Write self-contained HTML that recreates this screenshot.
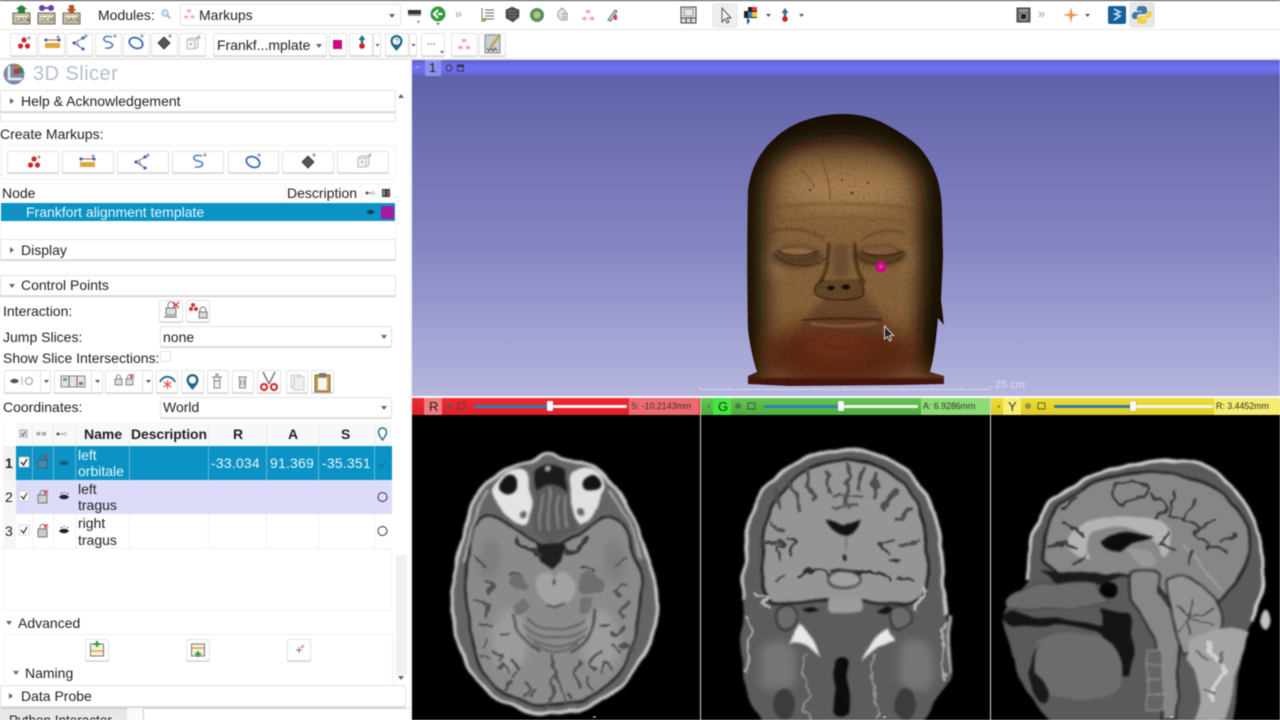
<!DOCTYPE html>
<html>
<head>
<meta charset="utf-8">
<style>
html,body{margin:0;padding:0;width:1280px;height:720px;overflow:hidden;background:#f7f7f7}
body{position:relative;font-family:"Liberation Sans",sans-serif;font-size:14px;color:#222}
#root{position:absolute;left:0;top:0;width:1280px;height:720px;filter:blur(.45px);overflow:hidden;background:#fff}
.a{position:absolute;white-space:nowrap}
.t{position:absolute;white-space:nowrap;line-height:16px}
.btn{position:absolute;box-sizing:border-box;background:#fff;border:1px solid #e2e2e2;border-radius:2px;box-shadow:0 1px 0 #d4d4d4}
.hdr{position:absolute;box-sizing:border-box;background:#fff;border:1px solid #e2e2e2;border-radius:2px;box-shadow:0 1px 0 #cfcfcf}
.tri-r{position:absolute;width:0;height:0;border-left:4px solid #666;border-top:3px solid transparent;border-bottom:3px solid transparent}
.tri-d{position:absolute;width:0;height:0;border-top:4px solid #666;border-left:3px solid transparent;border-right:3px solid transparent}
svg{position:absolute;overflow:visible}
.sl{position:absolute;font-size:8.800px;line-height:14px;color:#333;white-space:nowrap}
</style>
</head>
<body>
<div id="root">
<div class="a" style="left:0;top:0;width:1280px;height:1px;background:#444"></div>
<div class="a" style="left:0;top:29px;width:1280px;height:1px;background:#e4e4e4"></div>
<div class="a" style="left:0;top:58px;width:1280px;height:2px;background:#e8e8e8"></div>

<svg width="1280" height="60" style="left:0;top:0">
<defs>
<g id="pts"><circle cx="8" cy="5" r="2.600" fill="#cf2a30"/><circle cx="4.500" cy="11" r="2.600" fill="#cf2a30"/><circle cx="11.500" cy="11" r="2.600" fill="#cf2a30"/><path d="M13 1v4M11 3h4" stroke="#777" stroke-width=".8"/></g>
<g id="lin"><rect x="1" y="8" width="15" height="5" fill="#d9a73c"/><path d="M2 5h13" stroke="#c44" stroke-width="1"/><circle cx="2" cy="5" r="1.600" fill="#3d66b0"/><circle cx="15" cy="5" r="1.600" fill="#3d66b0"/><path d="M14 0v4M12 2h4" stroke="#777" stroke-width=".8"/></g>
<g id="ang"><path d="M14 3L3 9l9 6" fill="none" stroke="#6f88b0" stroke-width="1.200"/><path d="M6 8l2 4" stroke="#c66" stroke-width="1"/><circle cx="3" cy="9" r="1.600" fill="#3d66b0"/><circle cx="12" cy="15" r="1.600" fill="#3d66b0"/><circle cx="12" cy="4" r="1.600" fill="#3d66b0"/><path d="M15 0v4M13 2h4" stroke="#777" stroke-width=".8"/></g>
<g id="cur"><path d="M12 3C3 0 1 7 8 8s6 7-3 6" fill="none" stroke="#4f7fc6" stroke-width="1.600"/><path d="M15 0v4M13 2h4" stroke="#777" stroke-width=".8"/></g>
<g id="clo"><ellipse cx="8" cy="9" rx="7" ry="5" fill="none" stroke="#3d6bb8" stroke-width="1.800" transform="rotate(25 8 9)"/><path d="M14 0v4M12 2h4" stroke="#777" stroke-width=".8"/></g>
<g id="pla"><path d="M8 3l6 6-6 6-6-6z" fill="#555" stroke="#333" stroke-width=".8"/><path d="M14 0v4M12 2h4" stroke="#777" stroke-width=".8"/></g>
<g id="roi"><path d="M3 5l3-2h8v9l-3 2H3z" fill="#f4f4f4" stroke="#bbb"/><path d="M3 5h8v9M11 5l3-2" fill="none" stroke="#bbb"/><circle cx="7" cy="9" r="1" fill="#e77"/><path d="M15 0v4M13 2h4" stroke="#999" stroke-width=".8"/></g>
<g id="stars" fill="none" stroke="#ee8f95" stroke-width=".8"><path d="M6 1v5M3.500 2.500l5 2M8.500 2.500l-5 2"/><path d="M2.500 8v5M0 9.500l5 2M5 9.500l-5 2"/><path d="M10 8v5M7.500 9.500l5 2M12.500 9.500l-5 2"/></g>
<g id="disk"><rect x="0" y="7" width="17" height="11" fill="#d8cfa8" stroke="#444" stroke-width=".8"/><rect x="2" y="9" width="13" height="7" fill="#eee8cc" stroke="#777" stroke-width=".4"/></g>
</defs>
<g transform="translate(13,6)"><use href="#disk"/><path d="M5 7V3H2.500L8.500-1 14.500 3H12v4z" fill="#2e7d3c"/><text x="2.800" y="15.500" font-size="5.500" font-family="Liberation Sans" fill="#333">DATA</text></g>
<g transform="translate(38,6)"><use href="#disk"/><circle cx="4" cy="2" r="3" fill="#6a3fa0"/><circle cx="13" cy="2" r="3" fill="#6a3fa0"/><path d="M7 2h3" stroke="#6a3fa0" stroke-width="2"/><text x="3" y="15.500" font-size="5.500" font-family="Liberation Sans" fill="#333">DCM</text></g>
<g transform="translate(63,6)"><use href="#disk"/><path d="M6-1h5v4h2.500L8.500 8 3.500 3H6z" fill="#b5502a"/><text x="2.200" y="15.500" font-size="5.500" font-family="Liberation Sans" fill="#333">SAVE</text></g>
<circle cx="165" cy="13" r="3.200" fill="#d9e6f4" stroke="#8fb0d0"/><path d="M167.500 15.500l3 3" stroke="#c9a868" stroke-width="1.600"/>
<rect x="408" y="10" width="13" height="4" fill="#333"/><rect x="408" y="14" width="13" height="2" fill="#999"/>
<path d="M417 21l3 0-1.500 2z" fill="#555"/>
<circle cx="438" cy="14" r="7.500" fill="#2f9a3e"/><path d="M442.500 14h-4.500M438 10l-4 4 4 4" stroke="#fff" stroke-width="2.200" fill="none"/>
<path d="M436 23h4l-2 2z" fill="#555"/>
<path d="M456 12l2 2.500-2 2.500M459 12l2 2.500-2 2.500" stroke="#888" fill="none" stroke-width=".8"/>
<g transform="translate(481,8)"><path d="M1 0v13h3" stroke="#4a8a5a" fill="none"/><path d="M4 2h9M4 5h9M4 8h9M4 11h9" stroke="#666" stroke-width="1"/><rect x="2" y="10" width="3" height="3" fill="#d0803c"/></g>
<path d="M506 10l6-3 7 3v7l-6 5-7-4z" fill="#4a4f4a" stroke="#333" stroke-width=".5"/><path d="M508 11h9M508 14h9M509 17h7" stroke="#888" stroke-width=".7"/>
<circle cx="537" cy="15" r="7" fill="#5f8f58"/><circle cx="537" cy="15" r="3.500" fill="#a8c890"/>
<path d="M558 12l4-4 5 5v7h-6l-3-3z" fill="#e8e8e8" stroke="#888" stroke-width=".8"/><path d="M561 14h6M561 17h6M564 12v8" stroke="#888" stroke-width=".6"/>
<use href="#stars" x="582" y="8"/>
<path d="M608 20l7-10 2 1-6 10z" fill="#cfd8e8" stroke="#667"/><rect x="614" y="15" width="3" height="3" fill="#d33"/><rect x="614" y="18" width="3" height="2" fill="#c3c"/>
<g transform="translate(681,7)"><rect width="15" height="11" fill="#e6e6e6" stroke="#444"/><rect x="3" y="2" width="9" height="7" fill="none" stroke="#999"/><rect x="0" y="11" width="15" height="5" fill="#ddd" stroke="#444"/><path d="M5 11v5M10 11v5" stroke="#444"/></g>
<rect x="713" y="4" width="24" height="23" rx="2" fill="#efefef" stroke="#e4e4e4"/>
<path d="M722 8v14l3-3 2 4 2-1-2-4h4z" fill="#f4f4f4" stroke="#555" stroke-width="1"/>
<g transform="translate(744,7)"><rect width="13" height="11" fill="#222"/><rect x="0" y="0" width="4" height="4" fill="#fff"/><rect x="8" y="0" width="5" height="4" fill="#e33"/><rect x="4" y="5" width="5" height="5" fill="#38c"/><rect x="8" y="5" width="5" height="5" fill="#ec3"/><path d="M3 10v8l3-4z" fill="#2b4a88"/></g>
<path d="M766 14h5l-2.500 3z" fill="#555"/>
<path d="M785 8l3.500 5h-2.200v5h-2.600v-5h-2.200z" fill="#2d7088"/><circle cx="785" cy="19" r="2.800" fill="#c22"/>
<path d="M799 14h5l-2.500 3z" fill="#555"/>
<g transform="translate(1017,8)"><rect width="13" height="14" fill="#666" stroke="#444"/><circle cx="6.500" cy="8.500" r="3.500" fill="#222" stroke="#bbb"/><rect x="2" y="1.500" width="9" height="2" fill="#8ac"/></g>
<path d="M1039 12l2 2.500-2 2.500M1042 12l2 2.500-2 2.500" stroke="#888" fill="none" stroke-width=".8"/>
<path d="M1071 7l1.500 6.500 6.500 1.500-6.500 1.500-1.500 6.500-1.500-6.500-6.500-1.500 6.500-1.500z" fill="#e89a4c"/>
<path d="M1085 14h5l-2.500 3z" fill="#555"/>
<rect x="1108" y="6" width="18" height="18" rx="2" fill="#155f9c"/><path d="M1114 9l6 3-5 2 5 2-6 4" stroke="#bfe0f2" stroke-width="1.700" fill="none"/>
<rect x="1130" y="3" width="24" height="24" rx="2" fill="#e8e8e8" stroke="#ddd"/>
<path d="M1142 6c-4 0-5 1-5 3v2h5v1h-7c-2 0-3 2-3 4s1 3 3 3h2v-2c0-2 1-3 3-3h4c2 0 3-1 3-3V9c0-2-2-3-5-3z" fill="#3b77a8"/>
<path d="M1142 24c4 0 5-1 5-3v-2h-5v-1h7c2 0 3-2 3-4s-1-3-3-3h-2v2c0 2-1 3-3 3h-4c-2 0-3 1-3 3v2c0 2 2 3 5 3z" fill="#f2cf4a"/>
</svg>

<div class="t" style="left:98px;top:7px;font-size:14px">Modules:</div>
<div class="btn" style="left:180px;top:4px;width:221px;height:22px;box-shadow:none"></div>
<svg width="14" height="14" style="left:184px;top:8px"><use href="#stars" transform="scale(.85)"/></svg>
<div class="t" style="left:199px;top:7px;font-size:14px">Markups</div>
<div class="tri-d" style="left:389px;top:14px"></div>

<div class="btn" style="left:10px;top:33px;width:27px;height:23px"></div>
<div class="btn" style="left:38px;top:33px;width:27px;height:23px"></div>
<div class="btn" style="left:66px;top:33px;width:27px;height:23px"></div>
<div class="btn" style="left:95px;top:33px;width:27px;height:23px"></div>
<div class="btn" style="left:123px;top:33px;width:27px;height:23px"></div>
<div class="btn" style="left:151px;top:33px;width:27px;height:23px"></div>
<div class="btn" style="left:179px;top:33px;width:27px;height:23px"></div>
<div class="btn" style="left:213px;top:33px;width:114px;height:23px"></div>
<div class="t" style="left:217px;top:37px;font-size:14px">Frankf...mplate</div>
<div class="tri-d" style="left:316px;top:44px"></div>
<div class="btn" style="left:329px;top:33px;width:18px;height:23px"></div>
<div class="a" style="left:333px;top:40px;width:9px;height:9px;background:#cc0a7a"></div>
<div class="btn" style="left:349px;top:33px;width:24px;height:23px"></div>
<div class="btn" style="left:373px;top:33px;width:8px;height:23px"></div>
<div class="btn" style="left:385px;top:33px;width:24px;height:23px"></div>
<div class="btn" style="left:409px;top:33px;width:8px;height:23px"></div>
<div class="btn" style="left:421px;top:33px;width:24px;height:23px"></div>
<div class="btn" style="left:451px;top:33px;width:27px;height:23px"></div>
<div class="btn" style="left:479px;top:33px;width:27px;height:23px"></div>
<svg width="520" height="30" style="left:0;top:30px">
<use href="#pts" x="16" y="5"/><use href="#lin" x="44" y="5"/><use href="#ang" x="71" y="4"/><use href="#cur" x="100" y="4"/><use href="#clo" x="128" y="4"/><use href="#pla" x="156" y="4"/><use href="#roi" x="184" y="5"/>
<path d="M362 5l3.500 5h-2.200v5h-2.600v-5h-2.200z" fill="#2d7088"/><circle cx="362" cy="16" r="2.800" fill="#c22"/>
<path d="M375.500 14h4l-2 2.500z" fill="#555"/>
<path d="M396.500 21c-3-4-6-6-6-10a6 6 0 0112 0c0 4-3 6-6 10z" fill="#1f6a88"/><circle cx="396.500" cy="11" r="3.800" fill="#fff"/><text x="394.700" y="13.500" font-size="7" font-family="Liberation Sans" fill="#1f6a88">?</text>
<path d="M411.500 14h4l-2 2.500z" fill="#555"/>
<circle cx="428" cy="14" r=".8" fill="#777"/><circle cx="431" cy="14" r=".8" fill="#777"/><circle cx="434" cy="14" r=".8" fill="#777"/><path d="M440 21h4l-2 2.500z" fill="#555"/>
<use href="#stars" x="458" y="7"/>
<g transform="translate(485,5)"><rect width="15" height="18" fill="#c8d0d0" stroke="#889"/><path d="M2 13l2 3 2-3 2 3 2-3 2 3" stroke="#555" fill="none"/><path d="M5 11L14 0l1 1-8 11z" fill="#e0b030" stroke="#864" stroke-width=".4"/></g>
</svg>

<!-- 3D view -->
<div class="a" style="left:410px;top:60px;width:2px;height:660px;background:#f4f4f4"></div>
<div class="a" style="left:412px;top:76px;width:868px;height:320px;background:linear-gradient(180deg,#6161a9 0%,#8787c4 55%,#b6b6e0 100%)"></div>
<div class="a" style="left:412px;top:60px;width:868px;height:16px;background:linear-gradient(180deg,#5d60c4 0%,#6d70f0 35%,#6d70ee 70%,#5f62b8 100%)"></div>
<div class="a" style="left:425px;top:60px;width:16px;height:16px;background:#8e92ee"></div>
<div class="t" style="left:429px;top:60px;font-size:13px;color:#223">1</div>
<svg width="20" height="16" style="left:412px;top:60px"><path d="M3 7h4" stroke="#bbc"/></svg>
<svg width="20" height="16" style="left:445px;top:60px"><circle cx="4" cy="8" r="3" fill="none" stroke="#334" stroke-width=".9"/><rect x="12.500" y="5" width="6" height="6" fill="none" stroke="#334" stroke-width=".9"/><rect x="12.500" y="5" width="6" height="2" fill="#334"/></svg>

<svg width="868" height="336" viewBox="412 60 868 336" style="left:412px;top:60px">
<defs>
<clipPath id="hc"><path d="M748 384L748 376L757 372C753 360 750 345 748 330C747 290 747 230 748 190C751 170 757 158 767 146C778 134 787 128 798 123C815 116 830 114 843 114C860 114 875 118 887 125C902 133 912 140 920 148C930 160 936 172 939 185C941 195 942 205 942 212L943 257L941 300L944 325L938 318C936 340 934 358 930 372L944 376L944 384L900 385L790 386z"/></clipPath>
<filter id="b14" filterUnits="userSpaceOnUse" x="690" y="60" width="310" height="350"><feGaussianBlur stdDeviation="14"/></filter>
<filter id="b10" filterUnits="userSpaceOnUse" x="690" y="60" width="310" height="350"><feGaussianBlur stdDeviation="10"/></filter>
<filter id="b6" filterUnits="userSpaceOnUse" x="690" y="60" width="310" height="350"><feGaussianBlur stdDeviation="6"/></filter>
<filter id="b3" filterUnits="userSpaceOnUse" x="690" y="60" width="310" height="350"><feGaussianBlur stdDeviation="3"/></filter>
<filter id="b1" filterUnits="userSpaceOnUse" x="690" y="60" width="310" height="350"><feGaussianBlur stdDeviation="1"/></filter>
<filter id="b05" filterUnits="userSpaceOnUse" x="690" y="60" width="310" height="350"><feGaussianBlur stdDeviation=".6"/></filter>
<filter id="skin" filterUnits="userSpaceOnUse" x="690" y="60" width="310" height="350" color-interpolation-filters="sRGB">
<feTurbulence type="fractalNoise" baseFrequency=".35" numOctaves="2" seed="3" result="n"/>
<feColorMatrix in="n" type="matrix" values=".28 .28 0 0 .72  .28 .28 0 0 .72  .28 .28 0 0 .72  0 0 0 0 1" result="g"/>
<feBlend in="SourceGraphic" in2="g" mode="multiply" result="r"/>
<feGaussianBlur in="r" stdDeviation=".35"/>
</filter>
</defs>
<g clip-path="url(#hc)">
<g filter="url(#skin)">
<rect x="700" y="80" width="290" height="320" fill="#85613a"/>
<ellipse cx="845" cy="190" rx="60" ry="20" fill="#a57d50" filter="url(#b10)"/>
<ellipse cx="772" cy="262" rx="11" ry="16" fill="#a68860" opacity=".7" filter="url(#b6)"/>
<ellipse cx="912" cy="258" rx="11" ry="16" fill="#98784e" opacity=".5" filter="url(#b6)"/>
<path d="M700 70H990V150C900 138 790 138 700 150Z" fill="#190f07" filter="url(#b14)"/>
<path d="M748 384L748 330C747 290 747 230 748 190C751 170 757 158 767 146C778 134 787 128 798 123C815 116 830 114 843 114C860 114 875 118 887 125C902 133 912 140 920 148C930 160 936 172 939 185C941 195 942 205 942 212L943 257L941 300L938 318C936 340 934 358 930 372" fill="none" stroke="#170d06" stroke-width="34" filter="url(#b10)"/>
<path d="M940 200V370" stroke="#150c05" stroke-width="26" opacity=".7" filter="url(#b10)"/>
<ellipse cx="840" cy="355" rx="80" ry="34" fill="#562411" opacity=".9" filter="url(#b10)"/>
<ellipse cx="838" cy="345" rx="34" ry="15" fill="#73301a" opacity=".7" filter="url(#b6)"/>
<path d="M805 320L835 285L860 285L885 320L880 335L800 335z" fill="#5c3820" opacity=".6" filter="url(#b3)"/>
<path d="M822 158c2 12 8 20 8 42M800 170c6 4 12 10 14 18" stroke="#5e4026" stroke-width="1.500" fill="none" opacity=".5" filter="url(#b05)"/>
<path d="M775 208C800 202 890 202 915 210" stroke="#5d3f24" stroke-width="3" fill="none" opacity=".35" filter="url(#b1)"/>
<path d="M780 222C810 216 870 216 905 222" stroke="#5d3f24" stroke-width="2" fill="none" opacity=".3" filter="url(#b1)"/>
<circle cx="852" cy="193" r="1.500" fill="#5e4226"/><circle cx="810" cy="190" r="1.300" fill="#5e4226"/><circle cx="842" cy="180" r="1.100" fill="#5e4226"/><circle cx="868" cy="183" r="1.100" fill="#5e4226"/>
<ellipse cx="797" cy="257" rx="26" ry="11" fill="#2a1a0d" opacity=".5" filter="url(#b3)"/>
<ellipse cx="880" cy="256" rx="26" ry="10" fill="#2a1a0d" opacity=".5" filter="url(#b3)"/>
<ellipse cx="797" cy="252" rx="17" ry="4.500" fill="#9a6e48" opacity=".85" filter="url(#b1)"/>
<ellipse cx="880" cy="251" rx="17" ry="4.500" fill="#8f5e40" opacity=".85" filter="url(#b1)"/>
<path d="M778 251C788 257 806 257 818 251M862 252C872 257 892 257 904 251" stroke="#2e1c0e" stroke-width="1.100" fill="none" filter="url(#b05)"/>
<path d="M774 253C784 268 815 270 826 258M860 258C872 268 895 266 906 253" stroke="#2a1a0c" stroke-width="1.100" fill="none" opacity=".7" filter="url(#b05)"/>
<path d="M770 232C790 226 812 230 825 240M862 240C875 230 895 228 905 234" stroke="#4a301a" stroke-width="2.200" fill="none" opacity=".5" filter="url(#b1)"/>
<path d="M829 243C828 265 826 275 819 283M855 243C855 265 858 275 865 283" stroke="#281708" stroke-width="3" fill="none" opacity=".7" filter="url(#b1)"/>
<rect x="833" y="245" width="16" height="32" fill="#644a2d" opacity=".8" filter="url(#b3)"/>
<path d="M824 280C813 285 811 294 820 297C830 301 855 301 862 296C865 291 864 284 858 279" fill="#644526" stroke="#26160a" stroke-width="1.100" filter="url(#b05)"/>
<ellipse cx="831" cy="288" rx="3.800" ry="2.200" fill="#120a05" filter="url(#b05)"/><ellipse cx="846" cy="287" rx="4.200" ry="2.600" fill="#120a05" filter="url(#b05)"/>
<path d="M802 320C825 318 860 318 882 320" stroke="#321a0e" stroke-width="1.200" fill="none" filter="url(#b05)"/>
<path d="M810 323C825 327 860 327 876 323" stroke="#8e6648" stroke-width="3" fill="none" opacity=".7" filter="url(#b1)"/>
<path d="M820 343C835 350 850 350 865 343" stroke="#4c1e10" stroke-width="1.500" fill="none" opacity=".5" filter="url(#b1)"/>
<rect x="730" y="378" width="230" height="14" fill="#44190d" filter="url(#b1)"/>
</g>
</g>
<circle cx="881" cy="267" r="5.500" fill="#cc0a80"/><circle cx="881" cy="266.500" r="2.200" fill="#e8309c"/>
<path d="M884.500 326v13l3-2.500 2 4.500 2-1-2-4.500h4z" fill="#222" stroke="#fff" stroke-width=".8"/>
<path d="M700 389.500H990" stroke="#d6d6ee" stroke-width="1"/>
<path d="M700 386v3M729 387v2M758 387v2M787 387v2M816 387v2M845 386v3M874 387v2M903 387v2M932 387v2M961 387v2M990 386v3" stroke="#d6d6ee" stroke-width=".8"/>
<text x="995" y="388" font-size="11" font-family="Liberation Sans" fill="#dcdcf2">25 cm</text>
</svg>

<!-- slice bars -->
<div class="a" style="left:412px;top:396px;width:868px;height:2px;background:#fafafa"></div>
<div class="a" style="left:412px;top:398px;width:288px;height:17px;background:linear-gradient(180deg,#ef2a30,#e01f28)"></div>
<div class="a" style="left:701px;top:398px;width:289px;height:17px;background:linear-gradient(180deg,#64c44f,#4eac3e)"></div>
<div class="a" style="left:991px;top:398px;width:289px;height:17px;background:linear-gradient(180deg,#eedd33,#dfcc24)"></div>
<div class="a" style="left:412px;top:415px;width:868px;height:305px;background:#000"></div>
<div class="a" style="left:700px;top:398px;width:1px;height:322px;background:#d8d8d8"></div>
<div class="a" style="left:990px;top:398px;width:1px;height:322px;background:#d8d8d8"></div>
<div class="a" style="left:424px;top:398px;width:18px;height:17px;background:#f07a7c"></div>
<div class="t" style="left:429px;top:399px;font-size:13px;color:#222">R</div>
<div class="a" style="left:713px;top:398px;width:18px;height:17px;background:#44e83e"></div>
<div class="t" style="left:718px;top:399px;font-size:13px;color:#1a3a1a">G</div>
<div class="a" style="left:1003px;top:398px;width:18px;height:17px;background:#f8ee70"></div>
<div class="t" style="left:1008px;top:399px;font-size:13px;color:#333">Y</div>
<div class="a" style="left:474px;top:405px;width:153px;height:3px;border-radius:2px;background:linear-gradient(90deg,#2f7fb4 0,#2f7fb4 50%,#f4f4f4 50%,#f4f4f4 100%)"></div>
<div class="a" style="left:764px;top:405px;width:154px;height:3px;border-radius:2px;background:linear-gradient(90deg,#2f7fb4 0,#2f7fb4 50%,#f4f4f4 50%,#f4f4f4 100%)"></div>
<div class="a" style="left:1054px;top:405px;width:159px;height:3px;border-radius:2px;background:linear-gradient(90deg,#2f7fb4 0,#2f7fb4 50%,#f4f4f4 50%,#f4f4f4 100%)"></div>
<div class="a" style="left:547px;top:401px;width:6px;height:10px;background:#fafafa;border-radius:1px;box-shadow:0 0 1px #555"></div>
<div class="a" style="left:838px;top:401px;width:6px;height:10px;background:#fafafa;border-radius:1px;box-shadow:0 0 1px #555"></div>
<div class="a" style="left:1130px;top:401px;width:6px;height:10px;background:#fafafa;border-radius:1px;box-shadow:0 0 1px #555"></div>
<div class="a" style="left:629px;top:398px;width:70px;height:17px;background:#ee6a6e"></div>
<div class="a" style="left:921px;top:398px;width:69px;height:17px;background:#8edb76"></div>
<div class="a" style="left:1214px;top:398px;width:66px;height:17px;background:#f6ec70"></div>
<div class="sl" style="left:631px;top:399px">S: -10.2143mm</div>
<div class="sl" style="left:923px;top:399px">A: 6.9286mm</div>
<div class="sl" style="left:1216px;top:399px">R: 3.4452mm</div>
<svg width="868" height="17" viewBox="412 398 868 17" style="left:412px;top:398px">
<path d="M418 405v3l-2-1.500zM708 405v3l2-1.500zM998 405v3l2-1.500z" fill="#555"/>
<circle cx="449" cy="406" r="3" fill="#555" opacity=".6"/><rect x="458" y="403" width="7" height="6" fill="none" stroke="#444" stroke-width=".8"/>
<circle cx="738" cy="406" r="3" fill="#355" opacity=".6"/><rect x="748" y="403" width="7" height="6" fill="none" stroke="#344" stroke-width=".8"/>
<circle cx="1028" cy="406" r="3" fill="#665" opacity=".6"/><rect x="1038" y="403" width="7" height="6" fill="none" stroke="#443" stroke-width=".8"/>
</svg>

<!-- MRI slices -->
<svg width="868" height="305" viewBox="412 415 868 305" style="left:412px;top:415px">
<defs>
<filter id="o1" filterUnits="userSpaceOnUse" x="412" y="415" width="868" height="320" color-interpolation-filters="sRGB">
<feTurbulence type="fractalNoise" baseFrequency=".035" numOctaves="2" seed="5" result="n"/>
<feDisplacementMap in="SourceGraphic" in2="n" scale="8" xChannelSelector="R" yChannelSelector="G" result="d"/>
<feGaussianBlur in="d" stdDeviation="1.100"/>
</filter>
<filter id="o2" filterUnits="userSpaceOnUse" x="412" y="415" width="868" height="320" color-interpolation-filters="sRGB">
<feTurbulence type="fractalNoise" baseFrequency=".05" numOctaves="3" seed="11" result="n"/>
<feDisplacementMap in="SourceGraphic" in2="n" scale="16" xChannelSelector="R" yChannelSelector="G" result="d"/>
<feGaussianBlur in="d" stdDeviation=".9"/>
</filter>
<filter id="m2" filterUnits="userSpaceOnUse" x="412" y="415" width="868" height="320"><feGaussianBlur stdDeviation="4"/></filter>
<clipPath id="lowR"><rect x="412" y="415" width="288" height="305"/></clipPath>
<clipPath id="lowG"><rect x="701" y="415" width="289" height="305"/></clipPath>
<clipPath id="lowY"><rect x="991" y="415" width="289" height="305"/></clipPath>
</defs>
<!-- axial -->
<g clip-path="url(#lowR)">
<g filter="url(#o1)">
<path d="M548 453C558 453 564 460 574 463C596 466 612 478 622 496C636 520 646 548 652 572C658 590 658 610 654 630C644 672 606 712 550 714C496 714 462 672 454 626C449 600 452 586 456 566C464 530 470 506 482 488C492 474 510 466 530 463C538 460 540 453 548 453Z" fill="#646464" stroke="#c8c8c8" stroke-width="3.500"/>
<path d="M470 540C476 520 488 505 505 522L550 552L596 522C615 505 628 530 640 570C646 600 640 640 620 670C600 698 580 704 552 706C520 706 496 694 480 664C466 640 464 580 470 540Z" fill="#8a8a8a" stroke="#1c1c1c" stroke-width="2.200"/>
<path d="M488 490C478 510 468 535 464 562M610 490C622 510 634 530 642 558" fill="none" stroke="#a2a2a2" stroke-width="3"/>
<ellipse cx="510" cy="640" rx="18" ry="30" fill="#a0a0a0" opacity=".8" filter="url(#m2)"/>
<ellipse cx="600" cy="640" rx="18" ry="30" fill="#a0a0a0" opacity=".8" filter="url(#m2)"/>
<ellipse cx="490" cy="560" rx="12" ry="20" fill="#787878" opacity=".7" filter="url(#m2)"/>
<ellipse cx="614" cy="560" rx="12" ry="20" fill="#787878" opacity=".7" filter="url(#m2)"/>
<path d="M492 490C494 472 520 466 528 474C532 490 532 510 526 524C514 526 500 512 492 490Z" fill="#e4e4e4"/>
<path d="M606 485C604 470 580 465 572 474C568 490 570 512 578 524C590 522 602 505 606 485Z" fill="#e0e0e0"/>
<ellipse cx="508" cy="485" rx="10" ry="9" fill="#141414"/><ellipse cx="592" cy="484" rx="10" ry="8" fill="#141414"/>
<circle cx="522" cy="514" r="3.500" fill="#666"/><circle cx="580" cy="512" r="3.500" fill="#666"/>
<path d="M533 472L567 470L571 500L576 530L552 544L532 530L534 500Z" fill="#5a5a5a"/>
<path d="M541 495l-2 34M549 488v42M557 495l2 34M564 495l3 32" stroke="#8c8c8c" stroke-width="2.200"/>
<path d="M536 472C540 462 560 462 566 472L566 492C555 482 545 482 536 492Z" fill="#1c1c1c"/><circle cx="549" cy="469" r="3" fill="#aaa"/>
<path d="M538 546C546 542 556 542 566 546L562 562L552 570L542 562Z" fill="#1f1f1f"/>
<path d="M537 578C545 568 552 572 554 580C556 572 566 568 574 578C580 590 574 604 558 606C544 606 532 592 537 578Z" fill="#a2a2a2"/>
<path d="M554 580v6" stroke="#222" stroke-width="1.800"/><path d="M547 604l8 3 9-3" stroke="#333" stroke-width="1.500" fill="none"/>
<path d="M528 618C540 634 570 634 585 618M526 626C540 642 572 642 588 626M528 634C542 650 570 650 586 634M534 642C544 654 566 654 578 642" stroke="#4a4a4a" stroke-width="1.300" fill="none"/>
<path d="M512 614C514 630 524 642 540 651M596 610C594 630 590 642 570 652" stroke="#3a3a3a" stroke-width="2" fill="none"/>
</g>
<g filter="url(#o2)">
<path d="M514 540C526 545 532 552 542 556M590 536C580 542 572 550 562 554" stroke="#3a3a3a" stroke-width="3.500" fill="none"/>
<ellipse cx="517" cy="581" rx="10" ry="8" fill="#6e6e6e"/><ellipse cx="590" cy="583" rx="11" ry="10" fill="#6e6e6e"/>
<path d="M507 574C512 570 518 570 524 574M580 570C586 568 594 570 598 574" stroke="#222" stroke-width="1.600" fill="none"/>
<ellipse cx="520" cy="608" rx="7" ry="7" fill="#727272"/><ellipse cx="587" cy="604" rx="7" ry="8" fill="#727272"/>
<path d="M496 650l8 6-6 6M510 660l10 10-8 8M526 680l6 8-6 10M552 652v46l-8 8M552 672l10 14 6 18M580 660l-8 12 10 14M600 650l-10 10 6 8M475 600l12 6-4 10M630 602l-10 4 2 14M476 560l10 4M628 560l-10 6M490 640l-6 4M612 645l8 6M500 630l10 4M615 625l-14 2M485 580l10 6-6 8M626 585l-12 4 6 8M478 625l14-2M632 650l-12-4M495 672l8-6 4 10M612 670l-8-6-4 12M530 698l6-8M575 698l-6-8M505 690l8-10M595 688l-8-10M482 655l10 2M622 632l-10 2" stroke="#505050" stroke-width="2.600" fill="none"/>
</g>
</g>
<!-- coronal -->
<g clip-path="url(#lowG)">
<g filter="url(#o1)">
<path d="M847 450C890 450 925 475 938 530C944 560 944 590 945 615C951 640 950 660 950 680L935 700C930 712 925 720 915 725H765C755 715 752 700 744 680C740 650 742 620 744 600C742 570 746 520 760 495C775 470 810 450 847 450Z" fill="#5c5c5c"/>
<path d="M847 450C890 450 925 475 938 530C944 560 944 590 945 615M744 600C742 570 746 520 760 495C775 470 810 450 847 450" fill="none" stroke="#c8c8c8" stroke-width="3.500"/>
<path d="M847 460C885 460 920 485 926 540C930 565 930 590 924 598C910 606 880 605 860 600L815 600C790 606 775 605 768 600C762 590 761 565 763 540C770 485 810 460 847 460Z" fill="#959595" stroke="#1a1a1a" stroke-width="2.500"/>
<path d="M824 520C832 522 840 524 844 526C850 524 858 522 862 520C860 530 852 534 846 536C838 534 828 530 824 520Z" fill="#111"/>
<path d="M844 537v12" stroke="#777" stroke-width="2"/><ellipse cx="843" cy="557" rx="2" ry="4" fill="#111"/>
<ellipse cx="845" cy="581" rx="17" ry="9" fill="#a0a0a0" stroke="#3b3b3b" stroke-width="2"/>
<path d="M830 572h30" stroke="#222" stroke-width="2.500"/>
<rect x="828" y="598" width="34" height="14" rx="4" fill="#9c9c9c"/>
<path d="M800 610l12-3 8 4-12 2zM876 612l12-6 8 4-10 5z" fill="#111"/>
<ellipse cx="785" cy="618" rx="10" ry="12" fill="#6a6a6a" stroke="#333" stroke-width="2"/>
<ellipse cx="900" cy="618" rx="10" ry="12" fill="#6a6a6a" stroke="#333" stroke-width="2"/>
<path d="M798 624C808 628 815 640 820 660L812 650C804 640 796 640 790 642Z" fill="#e8e8e8"/>
<path d="M888 628C874 634 868 650 862 662L876 650C884 642 892 640 896 640Z" fill="#e8e8e8"/>
<rect x="834" y="655" width="14" height="62" rx="7" fill="#0c0c0c"/>
<rect x="760" y="640" width="36" height="50" rx="14" fill="#747474" filter="url(#m2)"/><rect x="898" y="640" width="36" height="50" rx="14" fill="#747474" filter="url(#m2)"/>
<ellipse cx="784" cy="705" rx="10" ry="16" fill="#3c3c3c"/><ellipse cx="905" cy="705" rx="10" ry="16" fill="#3c3c3c"/>
<rect x="947" y="615" width="3" height="60" fill="#aaa"/>
</g>
<g filter="url(#o2)">
<path d="M775 490l6 22M790 478l10 32M810 470l-3 18 8 10M825 470l4 22M847 465l0 40M862 470l-4 18M878 474l-8 26M895 490l-12 22M910 510l-16 14M920 540l-20 6M770 520l18 10M765 545l22 0" stroke="#4e4e4e" stroke-width="4.200" fill="none"/>
<path d="M832 495h30M835 507h24" stroke="#555" stroke-width="2.500" fill="none"/>
<path d="M765 548l14-8 8 8-10 2 4 10M790 540l8 2-4 12M895 540l-14 4 8 14M900 560l-14 4M772 580l14-4M912 582l-14-4" stroke="#3a3a3a" stroke-width="2.600" fill="none"/>
<path d="M798 578C802 568 820 566 830 576M860 576C868 566 885 568 892 580" stroke="#2c2c2c" stroke-width="2.500" fill="none"/>
<path d="M806 655C808 680 804 700 808 720M874 655C872 680 880 700 876 720" stroke="#949494" stroke-width="2" fill="none"/>
<path d="M745 615c8-2 10 10 4 20s6 20-2 40M945 620c-6 6-4 20 0 60" stroke="#aaa" stroke-width="2.500" fill="none"/>
<path d="M757 590l10 10-8 4 8 8M926 590l-10 16" stroke="#b8b8b8" stroke-width="2.500" fill="none"/>
</g>
</g>
<!-- sagittal -->
<g clip-path="url(#lowY)">
<g filter="url(#o1)">
<path d="M1005 613C1012 600 1022 590 1030 580C1028 560 1030 540 1038 522C1046 500 1072 482 1110 470C1140 462 1170 458 1195 462C1230 475 1255 510 1262 548C1267 580 1260 610 1247 632C1240 660 1238 690 1232 725H1060C1040 715 1020 690 1015 660C1005 645 1002 625 1005 613Z" fill="#5a5a5a"/>
<path d="M1028 580C1028 555 1030 535 1038 522C1046 500 1072 482 1110 470C1140 462 1170 458 1195 462C1230 475 1255 510 1262 548C1266 575 1260 600 1252 620" fill="none" stroke="#d4d4d4" stroke-width="3.500"/>
<path d="M1044 562C1042 540 1048 515 1060 505C1080 485 1115 472 1150 472C1195 470 1235 495 1248 530C1254 555 1240 580 1225 595C1210 610 1200 618 1195 622C1180 626 1172 600 1162 590C1150 575 1130 575 1100 575C1080 580 1060 580 1044 562Z" fill="#868686" stroke="#1e1e1e" stroke-width="2.500"/>
<path d="M1070 550C1066 530 1090 515 1120 517C1150 515 1170 520 1170 542C1170 552 1164 556 1160 554C1158 535 1135 525 1110 527C1090 530 1082 540 1090 558C1080 556 1074 554 1070 550Z" fill="#b4b4b4"/>
<path d="M1100 541C1112 532 1135 530 1155 537C1140 540 1130 545 1120 552C1110 550 1102 546 1100 541Z" fill="#0c0c0c"/>
<path d="M1183 545l40 45" stroke="#a8a8a8" stroke-width="1.600"/>
<path d="M1125 550c10-2 24 0 30 8 2 10-6 10-12 8z" fill="#979797"/>
<path d="M1132 572c10-4 22-2 28 4l-2 14c8 10 16 24 20 36 2 8-1 40-2 94h-13c-2-34-2-60-8-80-8-18-18-28-23-38-2-12-2-24 0-30z" fill="#868686" stroke="#262626" stroke-width="2"/>
<path d="M1168 580c10-8 26-4 40 10 14 14 20 36 8 46-10 10-24 14-34 18-6-22-14-44-14-74z" fill="#929292" stroke="#2a2a2a" stroke-width="1.800"/>
<ellipse cx="1110" cy="590" rx="9" ry="8" fill="#060606"/>
<path d="M1042 572L1095 572L1125 577L1100 585L1060 585Z" fill="#1b1b1b"/>
<path d="M1025 590c16-8 44-10 70-6l14 18-40 8-60-2c-4-8-4-14 16-18z" fill="#6a6a6a" stroke="#3e3e3e"/>
<path d="M1005 614c8-6 18-4 28 2l68 10-2-18 30 6 6 40-4 22h-10c-8-24-18-42-30-46-30-8-54-4-80-4-6-4-8-8-6-12z" fill="#141414"/>
<path d="M1036 640C1062 626 1100 630 1118 652C1128 672 1126 690 1108 696C1085 702 1060 700 1045 692C1036 672 1032 655 1036 640Z" fill="#6c6c6c"/>
<path d="M1040 640c-4 12-6 22-2 32 6 8 12 18 8 30-8 2-14-6-14-16-4-10 0-30 8-46z" fill="#1a1a1a"/>
<path d="M1147 650h16v60h-16z" fill="#646464" stroke="#9e9e9e"/>
<path d="M1147 665h16M1147 680h16M1147 695h16" stroke="#a6a6a6"/>
<path d="M1190 640C1220 625 1240 625 1250 632C1240 660 1232 690 1226 720H1195C1205 690 1195 670 1186 660Z" fill="#a4a4a4"/>
<path d="M1265 610c4 0 5 4 5 10s-3 12-5 10c-6-4-6-14 0-20z" fill="#c4c4c4"/>
</g>
<g filter="url(#o2)">
<path d="M1115 487c10-5 25-4 35-2 6 4-2 10-10 12-6 4-16 6-18 10-6-4-8-14-7-20zM1062 505l16-8M1060 525l18 3 6 8M1050 545l18-4 8 12M1070 565l18-8M1155 490l10 18-10 10M1175 490l-6 22 14 6M1195 500l-12 20 18 8M1215 520l-20 14 14 14M1228 552l-24-2M1170 530l-8 14 16 4M1190 550l-2 18M1235 535l-16 8" fill="none" stroke="#3c3c3c" stroke-width="2.800"/>
<path d="M1192 600v36M1192 618l-16-14M1192 618l18-10M1192 620l20 8M1192 622l-16 12" stroke="#4c4c4c" stroke-width="1.800" fill="none"/>
<path d="M1208 640l15 30-12 30" stroke="#d0d0d0" stroke-width="6" fill="none"/>
<path d="M1200 650l8 10M1225 650l-6 14M1205 690l12 4" stroke="#707070" stroke-width="3" fill="none"/>
</g>
</g>
<path d="M593 717h3M883 717h3M1170 717h3" stroke="#eee" stroke-width="1"/>
</svg>

<!-- left panel -->
<svg width="30" height="30" style="left:0;top:60px">
<circle cx="14" cy="14" r="10.500" fill="#7e8ca8"/><path d="M9 6v13h13" fill="none" stroke="#e9edf2" stroke-width="2.500"/><rect x="14" y="5" width="5" height="5" fill="#c4743c"/><rect x="18" y="8" width="5" height="5" fill="#3f7d4c"/><rect x="14" y="9" width="5" height="5" fill="#b23a3a"/>
</svg>
<div class="t" style="left:33px;top:64px;font-size:20px;line-height:20px;color:#b6bdcb;letter-spacing:.45px">3D Slicer</div>

<div class="hdr" style="left:0;top:90px;width:396px;height:22px"></div>
<div class="tri-r" style="left:10px;top:98px"></div>
<div class="t" style="left:21px;top:93px;font-size:14px">Help &amp; Acknowledgement</div>
<div class="a" style="left:0;top:113px;width:396px;height:9px;border:1px solid #e6e6e6;border-top:0;box-sizing:border-box"></div>
<div class="a" style="left:398px;top:94px;width:0;height:0;border-bottom:4px solid #666;border-left:3px solid transparent;border-right:3px solid transparent"></div>
<div class="a" style="left:396px;top:555px;width:11px;height:120px;background:#f0f0f0"></div>
<div class="tri-d" style="left:398px;top:676px"></div>

<div class="t" style="left:0;top:126px;font-size:14px">Create Markups:</div>
<div class="a" style="left:1px;top:145px;width:395px;height:35px;background:#fff;border:1px solid #efefef;box-sizing:border-box"></div>
<div class="btn" style="left:7px;top:151px;width:52px;height:22px"></div>
<div class="btn" style="left:62px;top:151px;width:52px;height:22px"></div>
<div class="btn" style="left:117px;top:151px;width:52px;height:22px"></div>
<div class="btn" style="left:172px;top:151px;width:52px;height:22px"></div>
<div class="btn" style="left:228px;top:151px;width:51px;height:22px"></div>
<div class="btn" style="left:282px;top:151px;width:52px;height:22px"></div>
<div class="btn" style="left:337px;top:151px;width:52px;height:22px"></div>
<svg width="400" height="24" style="left:0;top:150px">
<use href="#pts" x="26" y="4"/><use href="#lin" x="79" y="4"/><use href="#ang" x="133" y="3"/><use href="#cur" x="190" y="3"/><use href="#clo" x="245" y="3"/><use href="#pla" x="300" y="3"/><use href="#roi" x="355" y="3"/>
</svg>

<div class="a" style="left:1px;top:183px;width:395px;height:20px;background:#fff;border-top:1px solid #f4f4f4;box-sizing:border-box"></div>
<div class="t" style="left:2px;top:185px;font-size:14px">Node</div>
<div class="a" style="left:285px;top:183px;width:1px;height:20px;background:#f0f0f0"></div>
<div class="t" style="left:287px;top:185px;font-size:14px">Description</div>
<div class="a" style="left:361px;top:183px;width:1px;height:20px;background:#f0f0f0"></div>
<div class="a" style="left:378px;top:183px;width:1px;height:20px;background:#f0f0f0"></div>
<svg width="40" height="20" style="left:360px;top:183px"><circle cx="7" cy="10" r="1.500" fill="#555"/><path d="M8 10h4" stroke="#777"/><circle cx="13" cy="10" r="1.500" fill="none" stroke="#aaa" stroke-width=".7"/><rect x="22" y="6" width="8" height="8" fill="#333"/><rect x="23" y="7" width="2" height="6" fill="#6a6"/><rect x="27" y="7" width="2" height="6" fill="#a55"/></svg>
<div class="a" style="left:1px;top:203px;width:394px;height:18px;background:#0c93c5"></div>
<div class="t" style="left:26px;top:204px;font-size:14px;color:#e8f6fc">Frankfort alignment template</div>
<svg width="396" height="18" style="left:0;top:203px"><path d="M12 13l4-7 4 7z" fill="#2f86ac"/><path d="M366 9c2-3 7-3 9 0-2 3-7 3-9 0z" fill="#1d5a78"/><circle cx="370.500" cy="9" r="1.800" fill="#0d3040"/></svg>
<div class="a" style="left:381px;top:206px;width:13px;height:13px;background:#a81a9c"></div>
<div class="a" style="left:0;top:221px;width:396px;height:18px;background:#fff;border-left:1px solid #f2f2f2;border-right:1px solid #f2f2f2;box-sizing:border-box"></div>

<div class="hdr" style="left:0;top:239px;width:396px;height:21px"></div>
<div class="tri-r" style="left:10px;top:247px"></div>
<div class="t" style="left:21px;top:242px;font-size:14px">Display</div>
<div class="hdr" style="left:0;top:275px;width:396px;height:21px"></div>
<div class="tri-d" style="left:9px;top:284px"></div>
<div class="t" style="left:21px;top:277px;font-size:14px">Control Points</div>

<div class="t" style="left:3px;top:303px;font-size:14px">Interaction:</div>
<div class="btn" style="left:159px;top:300px;width:24px;height:22px"></div>
<div class="btn" style="left:186px;top:300px;width:24px;height:22px"></div>
<svg width="60" height="24" style="left:155px;top:299px">
<rect x="11" y="9" width="10" height="7" fill="#ddd" stroke="#777"/><path d="M13 9V6a3 3 0 016 0v3" fill="none" stroke="#777"/><path d="M18 3l6 6M24 3l-6 6" stroke="#d33" stroke-width="1.300"/><path d="M9 18h13" stroke="#555"/>
<circle cx="38" cy="6" r="2" fill="#c33"/><circle cx="36" cy="10" r="2" fill="#c33"/><circle cx="41" cy="10" r="2" fill="#c33"/><rect x="44" y="13" width="8" height="6" fill="#ddd" stroke="#777"/><path d="M45 13v-2a3 3 0 016 0v2" fill="none" stroke="#777"/>
</svg>

<div class="t" style="left:3px;top:329px;font-size:14px">Jump Slices:</div>
<div class="btn" style="left:160px;top:326px;width:232px;height:21px"></div>
<div class="t" style="left:163px;top:329px;font-size:14px">none</div>
<div class="tri-d" style="left:381px;top:335px"></div>
<div class="t" style="left:3px;top:350px;font-size:14px">Show Slice Intersections:</div>
<div class="a" style="left:160px;top:351px;width:9px;height:9px;border:1px solid #e2e2e2;background:#fff;border-radius:1px"></div>

<div class="btn" style="left:4px;top:370px;width:47px;height:23px"></div>
<div class="a" style="left:40px;top:370px;width:1px;height:23px;background:#e2e2e2"></div>
<div class="btn" style="left:54px;top:370px;width:49px;height:23px"></div>
<div class="a" style="left:91px;top:370px;width:1px;height:23px;background:#e2e2e2"></div>
<div class="btn" style="left:105px;top:370px;width:48px;height:23px"></div>
<div class="a" style="left:142px;top:370px;width:1px;height:23px;background:#e2e2e2"></div>
<div class="btn" style="left:156px;top:370px;width:22px;height:23px"></div>
<div class="btn" style="left:181px;top:370px;width:23px;height:23px"></div>
<div class="btn" style="left:207px;top:370px;width:22px;height:23px"></div>
<div class="btn" style="left:232px;top:370px;width:22px;height:23px"></div>
<div class="btn" style="left:257px;top:370px;width:24px;height:23px"></div>
<div class="btn" style="left:286px;top:370px;width:22px;height:23px"></div>
<div class="btn" style="left:311px;top:370px;width:23px;height:23px"></div>
<svg width="340" height="26" style="left:0;top:369px">
<path d="M10 12c2-3 7-3 9 0-2 3-7 3-9 0z" fill="#555"/><path d="M22 8v8" stroke="#aaa"/><circle cx="29" cy="12" r="3.500" fill="none" stroke="#999"/>
<path d="M44 11h5l-2.500 3z" fill="#555"/>
<rect x="61" y="7" width="24" height="11" fill="#e4e4e4" stroke="#888"/><path d="M69 7v11M77 7v11" stroke="#666"/><rect x="63" y="9" width="4" height="3" fill="#6a6"/><rect x="79" y="13" width="4" height="3" fill="#a66"/>
<path d="M95 11h5l-2.500 3z" fill="#555"/>
<rect x="115" y="10" width="7" height="6" fill="#ddd" stroke="#888"/><path d="M116.500 10V8a2 2 0 014 0v2" fill="none" stroke="#888"/><rect x="126" y="10" width="7" height="6" fill="#ddd" stroke="#888"/><path d="M127.500 10V8a2 2 0 014 0v2" fill="none" stroke="#888"/><path d="M130 5l4 4M134 5l-4 4" stroke="#d33"/>
<path d="M146 11h5l-2.500 3z" fill="#555"/>
<path d="M160 13a8 8 0 0115 0" stroke="#2a6e90" stroke-width="2" fill="none"/><path d="M167.500 11v9M163.500 13l8 5M171.500 13l-8 5" stroke="#e25050" stroke-width="1.200"/>
<path d="M192.500 21c-3-4-6-6-6-10a6 6 0 0112 0c0 4-3 6-6 10z" fill="#1f6a88"/><circle cx="192.500" cy="11" r="3.600" fill="#fff"/>
<path d="M212 8h10M214 8v11h6V8M214 12h6M216 5h2v3h-2z" stroke="#888" fill="#eee"/>
<path d="M238 8h9M239.500 8v11h6V8" stroke="#888" fill="#e8e8e8"/><path d="M241 11v5M244 11v5" stroke="#888"/>
<path d="M263 3l6 12M275 3l-6 12" stroke="#777" stroke-width="1.500"/><circle cx="264" cy="18" r="3" fill="none" stroke="#c22" stroke-width="2"/><circle cx="274" cy="18" r="3" fill="none" stroke="#c22" stroke-width="2"/>
<rect x="291" y="6" width="10" height="13" fill="#eee" stroke="#ccc"/><rect x="294" y="8" width="10" height="13" fill="#f0f0f0" stroke="#ccc"/>
<rect x="315" y="6" width="15" height="17" fill="#c29a4e" stroke="#8a6a2a"/><rect x="318" y="9" width="9" height="12" fill="#f4f4f4"/><rect x="319" y="4" width="7" height="4" fill="#777"/>
</svg>

<div class="t" style="left:3px;top:399px;font-size:14px">Coordinates:</div>
<div class="btn" style="left:160px;top:397px;width:232px;height:21px"></div>
<div class="t" style="left:163px;top:399px;font-size:14px">World</div>
<div class="tri-d" style="left:381px;top:406px"></div>

<!-- table -->
<div class="a" style="left:3px;top:421px;width:389px;height:190px;background:#fff;border:1px solid #f0f0f0;border-top:0;box-sizing:border-box"></div>
<div class="a" style="left:16px;top:422px;width:376px;height:23px;background:#f8f8f8"></div>
<div class="a" style="left:32px;top:422px;width:1px;height:23px;background:#ededed"></div>
<div class="a" style="left:53px;top:422px;width:1px;height:23px;background:#ededed"></div>
<div class="a" style="left:75px;top:422px;width:1px;height:23px;background:#ededed"></div>
<div class="a" style="left:129px;top:422px;width:1px;height:23px;background:#ededed"></div>
<div class="a" style="left:208px;top:422px;width:1px;height:23px;background:#ededed"></div>
<div class="a" style="left:266px;top:422px;width:1px;height:23px;background:#ededed"></div>
<div class="a" style="left:318px;top:422px;width:1px;height:23px;background:#ededed"></div>
<div class="a" style="left:374px;top:422px;width:1px;height:23px;background:#ededed"></div>
<div class="t" style="left:84px;top:426px;font-size:14px;font-weight:bold">Name</div>
<div class="t" style="left:131px;top:426px;font-size:14px;font-weight:bold;letter-spacing:-.1px">Description</div>
<div class="t" style="left:233px;top:426px;font-size:14px;font-weight:bold">R</div>
<div class="t" style="left:288px;top:426px;font-size:14px;font-weight:bold">A</div>
<div class="t" style="left:341px;top:426px;font-size:14px;font-weight:bold">S</div>
<svg width="395" height="24" style="left:0;top:422px">
<rect x="20" y="8" width="7" height="7" fill="#ddd" stroke="#aaa"/><path d="M21.500 11.500l1.500 2 2.500-4" stroke="#666" fill="none"/>
<rect x="36.500" y="10" width="4" height="3.500" fill="#aaa"/><rect x="42" y="10" width="4" height="3.500" fill="#aaa"/>
<circle cx="58" cy="12" r="1.500" fill="#555"/><path d="M59 12h4" stroke="#888"/><circle cx="65" cy="12" r="1.500" fill="none" stroke="#aaa" stroke-width=".7"/>
<path d="M382.500 18c-2-3-4-5-4-8a4 4 0 018 0c0 3-2 5-4 8z" fill="#fff" stroke="#1f6a88" stroke-width="1.400"/>
</svg>

<div class="a" style="left:3px;top:446px;width:13px;height:34px;background:#f2f2f2"></div>
<div class="a" style="left:3px;top:480px;width:13px;height:34px;background:#f6f6f6"></div>
<div class="a" style="left:3px;top:514px;width:13px;height:34px;background:#f6f6f6"></div>
<div class="a" style="left:16px;top:446px;width:376px;height:34px;background:#0c93c5"></div>
<div class="a" style="left:16px;top:480px;width:376px;height:34px;background:#dcdcfa"></div>
<div class="a" style="left:16px;top:514px;width:376px;height:34px;background:#fff"></div>
<div class="a" style="left:3px;top:548px;width:389px;height:1px;background:#efefef"></div>
<div class="a" style="left:129px;top:514px;width:1px;height:34px;background:#f2f2f2"></div>
<div class="a" style="left:208px;top:514px;width:1px;height:34px;background:#f2f2f2"></div>
<div class="a" style="left:266px;top:514px;width:1px;height:34px;background:#f2f2f2"></div>
<div class="a" style="left:318px;top:514px;width:1px;height:34px;background:#f2f2f2"></div>
<div class="a" style="left:374px;top:514px;width:1px;height:34px;background:#f2f2f2"></div>
<div class="a" style="left:32px;top:446px;width:1px;height:102px;background:rgba(220,220,220,.45)"></div>
<div class="a" style="left:53px;top:446px;width:1px;height:102px;background:rgba(220,220,220,.45)"></div>
<div class="a" style="left:75px;top:446px;width:1px;height:102px;background:rgba(220,220,220,.45)"></div>
<div class="a" style="left:129px;top:446px;width:1px;height:34px;background:rgba(255,255,255,.35)"></div>
<div class="a" style="left:208px;top:446px;width:1px;height:34px;background:rgba(255,255,255,.35)"></div>
<div class="a" style="left:266px;top:446px;width:1px;height:34px;background:rgba(255,255,255,.35)"></div>
<div class="a" style="left:318px;top:446px;width:1px;height:34px;background:rgba(255,255,255,.35)"></div>
<div class="a" style="left:374px;top:446px;width:1px;height:34px;background:rgba(255,255,255,.35)"></div>
<div class="t" style="left:5px;top:455px;font-size:14px;font-weight:bold">1</div>
<div class="t" style="left:5px;top:489px;font-size:14px">2</div>
<div class="t" style="left:5px;top:523px;font-size:14px">3</div>
<div class="t" style="left:78px;top:447px;font-size:14px;color:#e8f6fc">left</div>
<div class="t" style="left:78px;top:463px;font-size:14px;color:#e8f6fc">orbitale</div>
<div class="t" style="left:78px;top:481px;font-size:14px">left</div>
<div class="t" style="left:78px;top:497px;font-size:14px">tragus</div>
<div class="t" style="left:78px;top:515px;font-size:14px">right</div>
<div class="t" style="left:78px;top:532px;font-size:14px">tragus</div>
<div class="t" style="left:211px;top:455px;font-size:14px;color:#e8f6fc;letter-spacing:.2px">-33.034</div>
<div class="t" style="left:270px;top:455px;font-size:14px;color:#e8f6fc;letter-spacing:.2px">91.369</div>
<div class="t" style="left:322px;top:455px;font-size:14px;color:#e8f6fc;letter-spacing:.2px">-35.351</div>
<svg width="395" height="104" style="left:0;top:446px">
<rect x="19" y="11" width="10" height="10" rx="1" fill="#fff" stroke="#bbb"/><path d="M21 16l2.500 3 3.500-6" stroke="#222" stroke-width="1.300" fill="none"/>
<rect x="19" y="45" width="10" height="10" rx="1" fill="#fff" stroke="#ccc"/><path d="M21 50l2.500 3 3.500-6" stroke="#222" stroke-width="1.100" fill="none"/>
<rect x="19" y="79" width="10" height="10" rx="1" fill="#fff" stroke="#ddd"/><path d="M21 84l2.500 3 3.500-6" stroke="#222" stroke-width="1.100" fill="none"/>
<rect x="38" y="14" width="9" height="8" fill="#4a8aa6" stroke="#2a6a86"/><path d="M40 14v-2a2.500 2.500 0 015 0v2" fill="none" stroke="#2a6a86"/><path d="M44 9l4 4M48 9l-4 4" stroke="#b44" stroke-width="1"/>
<rect x="38" y="49" width="9" height="8" fill="#ccc" stroke="#777"/><path d="M40 49v-2a2.500 2.500 0 015 0v2" fill="none" stroke="#777"/><path d="M44 44l4 4M48 44l-4 4" stroke="#d33" stroke-width="1"/>
<rect x="38" y="83" width="9" height="8" fill="#ccc" stroke="#777"/><path d="M40 83v-2a2.500 2.500 0 015 0v2" fill="none" stroke="#777"/><path d="M44 78l4 4M48 78l-4 4" stroke="#d33" stroke-width="1"/>
<path d="M59 17c2-3 8-3 10 0-2 3-8 3-10 0z" fill="#1d5a78"/>
<path d="M59 51c2-3 8-3 10 0-2 3-8 3-10 0z" fill="#222"/><path d="M61 48l1-1M64 47v-1M67 48l1-1" stroke="#222"/>
<path d="M59 85c2-3 8-3 10 0-2 3-8 3-10 0z" fill="#222"/><path d="M61 82l1-1M64 81v-1M67 82l1-1" stroke="#222"/>
<path d="M379 18l2.500 3 4-6" stroke="#1c6a8a" stroke-width="1" fill="none"/>
<circle cx="382.500" cy="51" r="4.500" fill="none" stroke="#333" stroke-width="1"/>
<circle cx="382.500" cy="85" r="4.500" fill="none" stroke="#333" stroke-width="1"/>
</svg>

<div class="tri-d" style="left:6px;top:621px"></div>
<div class="t" style="left:18px;top:615px;font-size:14px">Advanced</div>
<div class="a" style="left:4px;top:634px;width:389px;height:50px;border:1px solid #f0f0f0;border-bottom:0;box-sizing:border-box"></div>
<div class="btn" style="left:85px;top:639px;width:24px;height:22px"></div>
<div class="btn" style="left:186px;top:639px;width:24px;height:22px"></div>
<div class="btn" style="left:287px;top:639px;width:24px;height:22px"></div>
<svg width="320" height="24" style="left:0;top:638px">
<rect x="90.500" y="6" width="13" height="12" fill="#f4f0e0" stroke="#777"/><path d="M91 13h12" stroke="#e8a23c" stroke-width="1.500"/><path d="M97 3v6M94 6h6" stroke="#2f9a3e" stroke-width="2"/>
<rect x="191.500" y="6" width="13" height="12" fill="#f4f0e0" stroke="#777"/><path d="M192 10h12" stroke="#e8a23c" stroke-width="1.500"/><path d="M198 13v6M195 16h6" stroke="#2f9a3e" stroke-width="2"/>
<path d="M296 12h6M299 9v6" stroke="#777"/><path d="M301 7l3 3M304 7l-3 3" stroke="#e88" stroke-width="1"/>
</svg>
<div class="tri-d" style="left:13px;top:671px"></div>
<div class="t" style="left:25px;top:665px;font-size:14px">Naming</div>

<div class="hdr" style="left:0;top:685px;width:406px;height:22px"></div>
<div class="tri-r" style="left:9px;top:693px"></div>
<div class="t" style="left:21px;top:688px;font-size:14px">Data Probe</div>

<div class="a" style="left:0;top:708px;width:127px;height:12px;background:#e6e6e6;border-top:1px solid #d0d0d0;box-sizing:border-box"></div>
<div class="a" style="left:127px;top:708px;width:17px;height:12px;background:#fafafa;border-right:1px solid #d0d0d0;box-sizing:border-box"></div>
<div class="a" style="left:144px;top:708px;width:266px;height:1px;background:#dcdcdc"></div>
<div class="t" style="left:9px;top:713px;font-size:13.500px">Python Interactor</div>
</div>
</body>
</html>
